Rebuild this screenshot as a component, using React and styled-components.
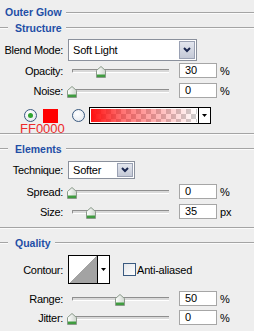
import React from "react";
import styled, { createGlobalStyle } from "styled-components";

const GlobalStyle = createGlobalStyle`
  html, body {
    margin: 0;
    padding: 0;
    background: #eeeeee;
  }
  body {
    font-family: "Liberation Sans", Arial, sans-serif;
    font-size: 11px;
    color: #000;
  }
`;

const Panel = styled.div`
  width: 254px;
  height: 331px;
  padding-top: 4px;
  box-sizing: border-box;
  display: flex;
  flex-direction: column;
  overflow: hidden;
  background: #eeeeee;
`;

//section headers with etched lines
const Header = styled.div`
  display: flex;
  align-items: center;
  height: ${(p) => p.$h || 15}px;
  margin-top: ${(p) => p.$mt || 0}px;
  padding-left: ${(p) => (p.$lead ? 0 : 5)}px;
  &::before {
    content: "";
    display: ${(p) => (p.$lead ? "block" : "none")};
    width: ${(p) => p.$lead}px;
    border-top: 1px solid #a4a4a4;
    box-shadow: 0 1px 0 #fbfbfb;
    margin-right: 7px;
  }
  &::after {
    content: "";
    flex: 1;
    border-top: 1px solid #a4a4a4;
    box-shadow: 0 1px 0 #fbfbfb;
    margin-left: 4px;
  }
`;

const HeaderText = styled.span`
  color: #1f4ea6;
  font-weight: bold;
  font-size: 10.5px;
`;

const Divider = styled.div`
  height: 1px;
  background: #a4a4a4;
  box-shadow: 0 1px 0 #fbfbfb;
  margin-top: ${(p) => p.$mt}px;
`;

const Row = styled.div`
  position: relative;
  display: flex;
  align-items: center;
  height: ${(p) => p.$h || 15}px;
  margin-top: ${(p) => p.$mt || 0}px;
`;

const Label = styled.span`
  width: 63px;
  flex-shrink: 0;
  text-align: right;
  margin-right: 5px;
  white-space: nowrap;
  letter-spacing: -0.3px;
`;

//dropdowns
const Select = styled.div`
  width: ${(p) => p.$w}px;
  height: ${(p) => p.$h}px;
  box-sizing: border-box;
  border: 1px solid #8a909c;
  background: #fff;
  display: flex;
  align-items: center;
  padding: 1px;
  font-size: 11px;
`;

const SelectText = styled.span`
  flex: 1;
  padding-left: 3px;
  letter-spacing: -0.2px;
`;

const SelectButton = styled.div`
  width: 16px;
  align-self: stretch;
  box-sizing: border-box;
  border: 1px solid #9aa1b3;
  background: linear-gradient(#e3e6ee, #c4c9d6);
  display: flex;
  align-items: center;
  justify-content: center;
`;

const Chevron = () => (
  <svg width="8" height="6" viewBox="0 0 8 6">
    <path d="M1 1 L4 4 L7 1" fill="none" stroke="#1b2850" strokeWidth="2" />
  </svg>
);

//sliders
const Slider = styled.div`
  position: relative;
  width: 107px;
  height: 100%;
  padding-left: 4px;
  box-sizing: border-box;
  display: flex;
  align-items: center;
  flex-shrink: 0;
`;

const Track = styled.div`
  width: 96px;
  height: 2px;
  border-top: 1px solid #8e8e8e;
  border-left: 1px solid #8e8e8e;
  border-bottom: 1px solid #ffffff;
  background: #d9d9d9;
  border-radius: 1px 0 0 1px;
`;

const ThumbWrap = styled.div`
  position: absolute;
  top: 50%;
  margin-top: -5px;
  width: 10px;
  height: 12px;
  line-height: 0;
`;

const Thumb = ({ value }) => (
  <ThumbWrap style={{ left: 4 + value * 96 - 5 }}>
    <svg width="10" height="12" viewBox="0 0 10 12">
      <defs>
        <linearGradient id="tg" x1="0" y1="0" x2="1" y2="0">
          <stop offset="0" stopColor="#ffffff" />
          <stop offset="1" stopColor="#cfd6cf" />
        </linearGradient>
      </defs>
      <path d="M0.5 4.5 L5 0.5 L9.5 4.5 L9.5 11.5 L0.5 11.5 Z" fill="url(#tg)" stroke="#8a9a8a" />
      <rect x="1" y="8.5" width="8" height="2.5" fill="#3f9c3f" />
    </svg>
  </ThumbWrap>
);

const NumberBox = styled.div`
  width: 38px;
  height: 15px;
  box-sizing: border-box;
  border: 1px solid #a6a6a6;
  background: #fff;
  margin-left: 4px;
  padding-left: 5px;
  line-height: 13px;
  font-size: 11px;
  flex-shrink: 0;
`;

const Unit = styled.span`
  margin-left: 3px;
  font-size: 11px;
`;

//color row
const ColorRow = styled(Row)`
  padding-left: 24px;
`;

const Radio = styled.div`
  width: 13px;
  height: 13px;
  box-sizing: border-box;
  border-radius: 50%;
  border: 1px solid #3a5a80;
  background: radial-gradient(circle at 40% 35%, #ffffff, #dfe3ea);
  display: flex;
  align-items: center;
  justify-content: center;
  margin-right: ${(p) => p.$mr}px;
  flex-shrink: 0;
  &::after {
    content: "";
    display: ${(p) => (p.$on ? "block" : "none")};
    width: 5px;
    height: 5px;
    border-radius: 50%;
    background: #2fa42f;
  }
`;

const Swatch = styled.div`
  width: 15px;
  height: 14px;
  background: #ff0000;
  margin-right: 14px;
  flex-shrink: 0;
`;

const GradientBox = styled.div`
  width: 122px;
  height: 17px;
  box-sizing: border-box;
  border: 1px solid #000;
  display: flex;
  background: #fff;
`;

const GradientFill = styled.div`
  flex: 1;
  margin: 1px;
  background: linear-gradient(to right, #ff1010, rgba(255, 0, 0, 0.55) 30%, rgba(255, 0, 0, 0) 100%),
    repeating-conic-gradient(#cfcfcf 0 25%, #ffffff 0 50%) 0 0 / 10px 10px;
`;

const ArrowPart = styled.div`
  width: 11px;
  border-left: 1px solid #000;
  background: #fff;
  display: flex;
  align-items: center;
  justify-content: center;
`;

const SmallArrow = () => (
  <svg width="5" height="3" viewBox="0 0 5 3">
    <path d="M0 0 L5 0 L2.5 3 Z" fill="#000" />
  </svg>
);

const HexNote = styled.span`
  position: absolute;
  left: 20px;
  top: 15px;
  font-size: 13px;
  line-height: 13px;
  color: #ec2a2a;
`;

//contour
const ContourBox = styled.div`
  width: 42px;
  height: 29px;
  box-sizing: border-box;
  border: 1px solid #000;
  display: flex;
  background: #fff;
  flex-shrink: 0;
`;

const ContourCurve = styled.div`
  flex: 1;
  background: linear-gradient(to bottom right, #ffffff 50%, #a3a3a3 50%);
`;

const Checkbox = styled.div`
  width: 13px;
  height: 13px;
  box-sizing: border-box;
  border: 1px solid #3a5a80;
  background: linear-gradient(135deg, #e4e6ea, #ffffff);
  margin-left: 13px;
  margin-right: 1px;
  flex-shrink: 0;
`;

const CheckText = styled.span`
  letter-spacing: -0.2px;
`;

const SliderRow = ({ label, value, pos, unit, mt }) => (
  <Row $mt={mt}>
    <Label>{label}</Label>
    <Slider>
      <Track />
      <Thumb value={pos} />
    </Slider>
    <NumberBox>{value}</NumberBox>
    <Unit>{unit}</Unit>
  </Row>
);

const App = () => {
  return (
    <>
      <GlobalStyle />
      <Panel>
        <Header $h={16}>
          <HeaderText>Outer Glow</HeaderText>
        </Header>
        <Header $lead={8}>
          <HeaderText>Structure</HeaderText>
        </Header>

        <Row $mt={4} $h={22}>
          <Label>Blend Mode:</Label>
          <Select $w={129} $h={22}>
            <SelectText>Soft Light</SelectText>
            <SelectButton>
              <Chevron />
            </SelectButton>
          </Select>
        </Row>
        <SliderRow label="Opacity:" value="30" pos={0.3} unit="%" mt={2} />
        <SliderRow label="Noise:" value="0" pos={0} unit="%" mt={5} />

        <ColorRow $mt={9} $h={17}>
          <Radio $on $mr={6} />
          <Swatch />
          <Radio $mr={4} />
          <GradientBox>
            <GradientFill />
            <ArrowPart>
              <SmallArrow />
            </ArrowPart>
          </GradientBox>
          <HexNote>FF0000</HexNote>
        </ColorRow>

        <Divider $mt={9} />
        <Header $lead={8} $mt={7}>
          <HeaderText>Elements</HeaderText>
        </Header>
        <Row $mt={5} $h={18}>
          <Label>Technique:</Label>
          <Select $w={67} $h={18}>
            <SelectText>Softer</SelectText>
            <SelectButton>
              <Chevron />
            </SelectButton>
          </Select>
        </Row>
        <SliderRow label="Spread:" value="0" pos={0} unit="%" mt={5} />
        <SliderRow label="Size:" value="35" pos={0.2} unit="px" mt={5} />

        <Divider $mt={8} />
        <Header $lead={8} $mt={7}>
          <HeaderText>Quality</HeaderText>
        </Header>
        <Row $mt={5} $h={29}>
          <Label>Contour:</Label>
          <ContourBox>
            <ContourCurve />
            <ArrowPart>
              <SmallArrow />
            </ArrowPart>
          </ContourBox>
          <Checkbox />
          <CheckText>Anti-aliased</CheckText>
        </Row>
        <SliderRow label="Range:" value="50" pos={0.5} unit="%" mt={7} />
        <SliderRow label="Jitter:" value="0" pos={0} unit="%" mt={4} />
      </Panel>
    </>
  );
};

export default App;
